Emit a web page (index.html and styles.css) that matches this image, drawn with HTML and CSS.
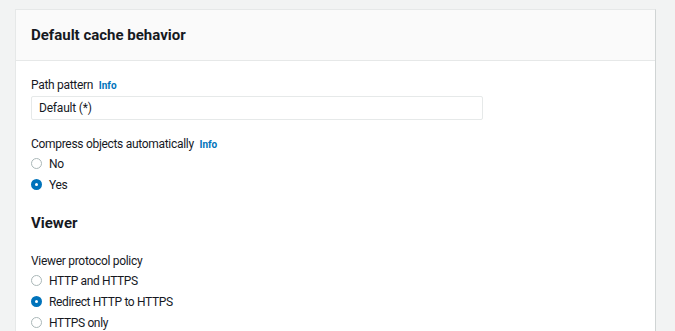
FILE: index.html
```
<!DOCTYPE html>
<html>
<head>
<meta charset="utf-8">
<link rel="stylesheet" href="styles.css">
</head>
<body>
<div class="page">
  <div class="card">
    <div class="card-header"><h2 class="title">Default cache behavior</h2></div>
    <div class="card-body">
      <div class="field">
        <div class="label">Path pattern <span class="info">Info</span></div>
        <div class="input">Default (*)</div>
      </div>
      <div class="field">
        <div class="label">Compress objects automatically <span class="info">Info</span></div>
        <div class="radios">
          <div class="radio"><span class="dot"></span>No</div>
          <div class="radio"><span class="dot checked"></span>Yes</div>
        </div>
      </div>
      <h3 class="section">Viewer</h3>
      <div class="field">
        <div class="label">Viewer protocol policy</div>
        <div class="radios">
          <div class="radio"><span class="dot"></span>HTTP and HTTPS</div>
          <div class="radio"><span class="dot checked"></span>Redirect HTTP to HTTPS</div>
          <div class="radio"><span class="dot"></span>HTTPS only</div>
        </div>
      </div>
    </div>
  </div>
</div>
</body>
</html>
```
FILE: styles.css
```
html, body { margin: 0; padding: 0; }
body {
  background: #f2f3f3;
  font-family: Roboto, "Noto Sans", sans-serif;
  color: #16191f;
  overflow: hidden;
  height: 331px;
}
.page { padding: 9px 19px 0 15px; }
.card {
  background: #fff;
  border-top: 1px solid #e6e8e8;
  border-left: 1px solid #e6e8e8;
  border-right: 1px solid #d0d4d4;
  width: 639px;
  min-height: 340px;
}
.card-header {
  background: #fafafa;
  border-bottom: 1px solid #e6e8e8;
  height: 50px;
  display: flex;
  align-items: center;
  padding: 0 15px;
}
.title { margin: 0; font-size: 15px; font-weight: 700; }
.card-body { padding: 16px 15px 0; }
.field { margin-bottom: 15px; display: flow-root; }
.label { font-size: 12px; line-height: 16px; height: 16px; letter-spacing: -0.3px; }
.info { font-size: 10px; font-weight: 700; color: #0073bb; margin-left: 3px; letter-spacing: 0; }
.input {
  margin: 3px 0 1px;
  width: 452px;
  height: 24px;
  border: 1px solid #e6e9e9;
  border-radius: 2px;
  box-sizing: border-box;
  padding: 0 7px;
  font-size: 12px;
  line-height: 22px;
  letter-spacing: -0.2px;
}
.radios { margin-top: 1px; }
.radio { display: flex; align-items: center; font-size: 12px; height: 21px; letter-spacing: -0.35px; }
.dot {
  width: 11px; height: 11px; box-sizing: border-box;
  border: 1px solid #aab7b8; border-radius: 50%;
  margin-right: 7px; background: #fff;
}
.dot.checked { border: 4px solid #0073bb; }
.section { margin: 18px 0 20px; font-size: 15px; font-weight: 700; line-height: 20px; }
```
